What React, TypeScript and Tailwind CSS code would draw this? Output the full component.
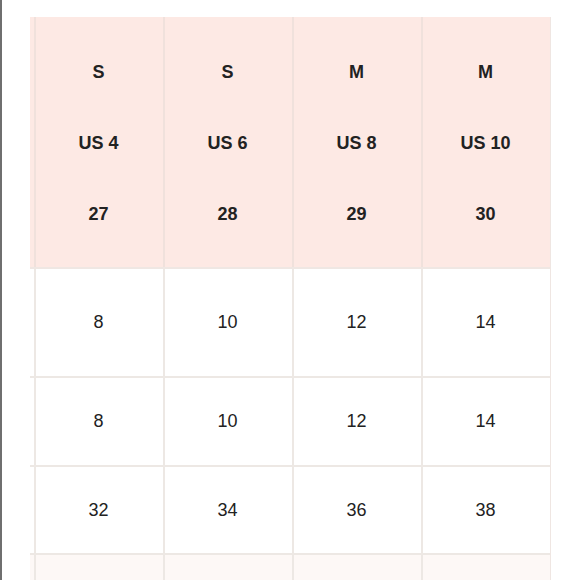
const header = [
  ["S", "US 4", "27"],
  ["S", "US 6", "28"],
  ["M", "US 8", "29"],
  ["M", "US 10", "30"],
];

const rows = [
  { values: ["8", "10", "12", "14"], h: "h-[109px]" },
  { values: ["8", "10", "12", "14"], h: "h-[89px]" },
  { values: ["32", "34", "36", "38"], h: "h-[88px]" },
];

export default function App() {
  return (
    <div
      className="flex h-[580px] w-[580px] overflow-hidden bg-white text-[#222]"
      style={{ fontFamily: '"Liberation Sans", Arial, sans-serif' }}
    >
      <div className="w-[2px] shrink-0 bg-[#6f6f6f]" />
      <div className="pl-[28px] pt-[17px]">
        <div className="w-[521px] border-r border-[#efe6e2]">
          {/* header */}
          <div className="flex h-[252px] border-b-2 border-[#efe7e3] bg-[#fde9e4]">
            <div className="w-[4px] shrink-0" />
            {header.map((col, i) => (
              <div
                key={i}
                className="flex w-[129px] shrink-0 flex-col border-l-2 border-[#f0e1dc] pt-[20px] pr-[2px] text-[18px] font-bold"
              >
                {col.map((t) => (
                  <div key={t} className="flex h-[71px] items-center justify-center">
                    {t}
                  </div>
                ))}
              </div>
            ))}
          </div>

          {rows.map((r, ri) => (
            <div key={ri} className={`flex ${r.h} border-b-2 border-[#ede8e4]`}>
              <div className="w-[4px] shrink-0" />
              {r.values.map((v, i) => (
                <div
                  key={i}
                  className="flex w-[129px] shrink-0 items-center justify-center border-l-2 border-[#ede8e4] pr-[2px] text-[18px]"
                >
                  {v}
                </div>
              ))}
            </div>
          ))}

          <div className="flex h-[60px] bg-[#fdf8f6]">
            <div className="w-[4px] shrink-0" />
            {[0, 1, 2, 3].map((i) => (
              <div key={i} className="w-[129px] shrink-0 border-l-2 border-[#ede8e4]" />
            ))}
          </div>
        </div>
      </div>
    </div>
  );
}
